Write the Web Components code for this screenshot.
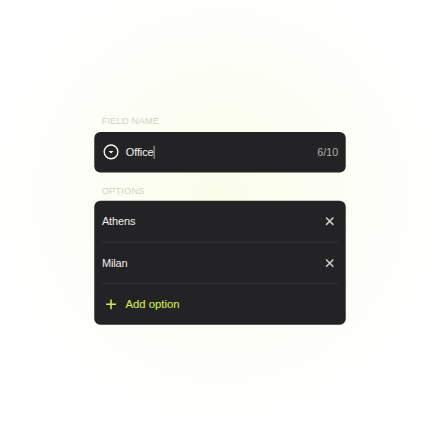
<!DOCTYPE html>
<html lang="en"><head><meta charset="utf-8"><title>Field editor</title>
<style>
html,body{margin:0;height:440px;width:440px;overflow:hidden}
body{background:radial-gradient(circle at 220px 195px,#fbfeeb 0,#fcfeef 50px,#fcfef4 100px,#fdfef8 150px,#fefffc 190px,#fff 230px);font-family:"Liberation Sans",Arial,sans-serif;display:flex;justify-content:center;align-items:flex-start}
</style></head><body>
<field-editor>
  <field-label>FIELD NAME</field-label>
  <name-input value="Office" count="6/10"></name-input>
  <field-label class="second">OPTIONS</field-label>
  <option-list>
    <option-row>Athens</option-row>
    <option-row>Milan</option-row>
    <add-option>Add option</add-option>
  </option-list>
</field-editor>
<script>
function def(name, html){
  customElements.define(name, class extends HTMLElement{
    constructor(){super();this.attachShadow({mode:'open'}).innerHTML=html;}
  });
}
def('field-editor',`<style>:host{display:flex;flex:none;flex-direction:column;width:330px;margin-top:112.8px;transform:scale(.762);transform-origin:top center}</style><slot></slot>`);
def('field-label',`<style>:host{display:block;height:24.7px;line-height:21.8px;padding-left:9.7px;font-size:12.3px;letter-spacing:.15px;color:#cfd3c0}:host(.second){height:15.7px;margin-top:16.9px;line-height:15.7px;margin-bottom:5.2px}</style><slot></slot>`);
customElements.define('name-input',class extends HTMLElement{
  connectedCallback(){
    this.attachShadow({mode:'open'}).innerHTML=`<style>
    :host{display:flex;align-items:center;height:53px;background:#232325;border-radius:8px;padding:0 10px 0 10.8px;font-size:14.4px;letter-spacing:-.15px;color:#f4f4f2}
    svg{flex:none;width:22px;height:22px;margin-right:8.5px}
    .v{flex:1}.v i{display:inline-block;width:1.2px;height:17px;background:#e8e8e6;vertical-align:-3.5px}
    .c{color:#b2b2b0;font-size:14px;letter-spacing:0}</style>
    <svg viewBox="0 0 22 22" fill="none"><circle cx="11" cy="11" r="9" stroke="#f8f8f6" stroke-width="1.8"/><path d="M7.8 10h6.4L11 13.2z" fill="#f8f8f6"/></svg>
    <span class="v">${this.getAttribute('value')}<i></i></span><span class="c">${this.getAttribute('count')}</span>`;
  }
});
def('option-list',`<style>:host{display:block;background:#232325;border-radius:8px;padding:0 10px}</style><slot></slot>`);
def('option-row',`<style>:host{display:flex;align-items:center;justify-content:space-between;height:54.4px;box-sizing:border-box;border-bottom:1.3px solid #373738;font-size:14.4px;letter-spacing:-.15px;color:#f0f0ee;padding-right:3px}svg{width:16px;height:16px}</style><slot></slot><svg viewBox="0 0 16 16"><path d="M3.2 3.2l9.6 9.6M12.8 3.2l-9.6 9.6" stroke="#cfcfcd" stroke-width="2" fill="none"/></svg>`);
def('add-option',`<style>:host{display:flex;align-items:center;height:53.6px;font-size:14.8px;color:#d6ef48;padding-left:3px;-webkit-text-stroke:.1px #d6ef48}svg{width:18px;height:18px;margin-right:10px}</style><svg viewBox="0 0 18 18"><path d="M9 2.6v12.8M2.6 9h12.8" stroke="#d6ef48" stroke-width="2" fill="none"/></svg><slot></slot>`);
</script>
</body></html>
